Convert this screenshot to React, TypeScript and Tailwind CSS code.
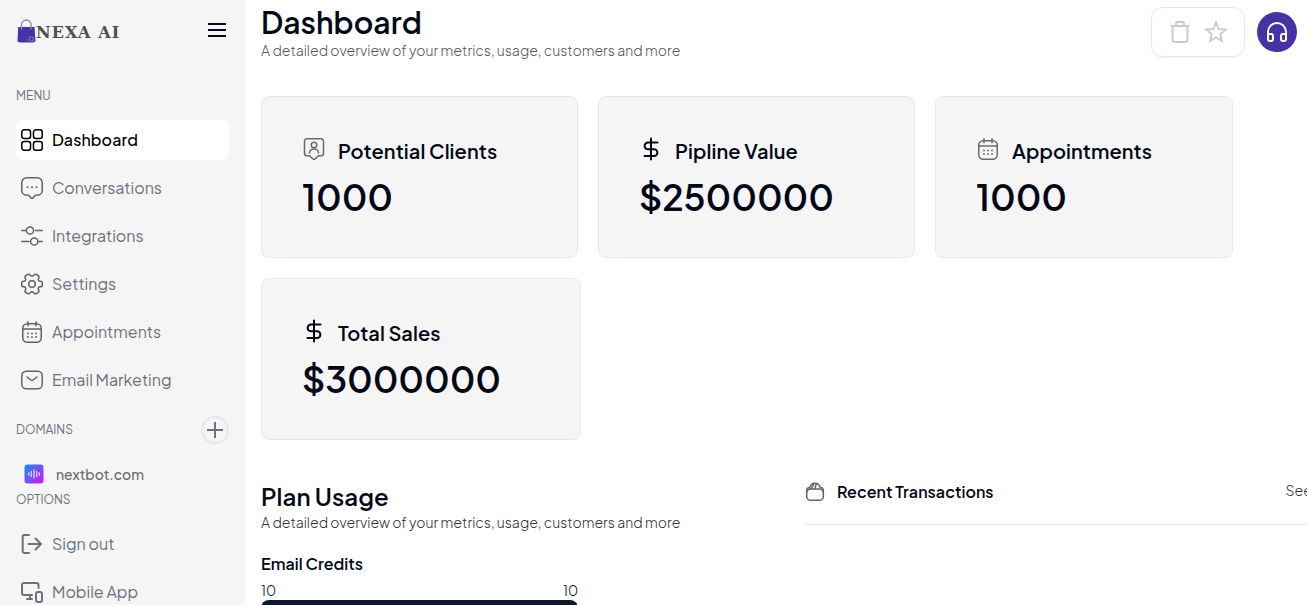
import type { ReactNode } from "react";

const Svg = ({ children, className = "", w = 24, h = 24, sw = 1.5, box = "0 0 24 24" }: { children: ReactNode; className?: string; w?: number; h?: number; sw?: number; box?: string }) => (
  <svg width={w} height={h} viewBox={box} fill="none" stroke="currentColor" strokeWidth={sw} strokeLinecap="round" strokeLinejoin="round" className={`shrink-0 ${className}`}>
    {children}
  </svg>
);

const CalendarShape = () => (
  <>
    <rect x="2.75" y="3.75" width="18.5" height="18.5" rx="4.5" />
    <path d="M3 9h18M8 1.75v4M16 1.75v4" />
    <path strokeWidth="1.9" d="M8 13.5h.01M12 13.5h.01M16 13.5h.01M8 17h.01M12 17h.01M16 17h.01" />
  </>
);

const Dollar = () => (
  <Svg sw={2}>
    <path d="M12 1.5v21M18.5 5.5H9a3.4 3.4 0 0 0 0 6.8h6a3.4 3.4 0 0 1 0 6.8H5.5" />
  </Svg>
);

const menu = [
  {
    label: "Conversations",
    icon: (
      <>
        <path d="M7 1.75h10a5 5 0 0 1 5.25 5.25v7.5A4.5 4.5 0 0 1 18 19c-2 0-2.9.2-3.6 1.1l-1.2 1.6a1.5 1.5 0 0 1-2.4 0l-1.2-1.6C8.9 19.2 8 19 6 19a4.5 4.5 0 0 1-4.25-4.5V7A5 5 0 0 1 7 1.75z" />
        <path strokeWidth="2" d="M7.5 11.2h.01M12 11.2h.01M16.5 11.2h.01" />
      </>
    ),
  },
  {
    label: "Integrations",
    icon: (
      <>
        <path d="M1.75 6.5h4.5M15.5 6.5h6.75M1.75 17.5H9M18.5 17.5h3.75" />
        <circle cx="10" cy="6.5" r="3.6" />
        <circle cx="14.2" cy="17.5" r="3.6" />
      </>
    ),
  },
  {
    label: "Settings",
    icon: (
      <>
        <circle cx="12" cy="12" r="3.3" />
        <path d="M10.2 3.2c.9 1.5 2.7 1.5 3.6 0 .6-1 1.7-1.2 2.6-.7l1.4.8c1.1.7 1.4 1.9.8 3-.9 1.5 0 3 1.7 3 1.2 0 2 .9 2 2v1.4c0 1.2-.9 2.1-2 2.1-1.7 0-2.6 1.5-1.7 3 .6 1.1.2 2.3-.8 2.9l-1.500.8c-.9.5-2 .2-2.600-.7-.9-1.500-2.600-1.500-3.500 0-.6.9-1.700 1.200-2.600.7l-1.400-.8c-1.100-.6-1.400-1.800-.8-2.900.9-1.500 0-3-1.700-3-1.200 0-2-.9-2-2.100v-1.400c0-1.100.9-2 2-2 1.700 0 2.600-1.500 1.700-3-.6-1.100-.2-2.300.8-3l1.400-.8c.9-.5 2-.3 2.600.7z" />
      </>
    ),
  },
  { label: "Appointments", icon: <CalendarShape /> },
  {
    label: "Email Marketing",
    icon: (
      <>
        <rect x="1.75" y="3.25" width="20.5" height="17.5" rx="4.5" />
        <path d="m7 9 3.1 2.5c1 .8 2.7.8 3.7 0L17 9" />
      </>
    ),
  },
];

const Card = ({ icon, title, value, className }: { icon: ReactNode; title: string; value: string; className: string }) => (
  <div className={`h-[162px] shrink-0 rounded-lg border border-slate-200 bg-[#f5f5f5] px-10 pt-10 ${className}`}>
    <div className="flex h-7 items-start">
      {icon}
      <h3 className="ml-3 text-[20px] leading-[27px] font-semibold tracking-[0.08px] whitespace-nowrap">{title}</h3>
    </div>
    <p className="mt-3 text-[36px] leading-10 font-[650] tracking-[-0.12px] whitespace-nowrap">{value}</p>
  </div>
);

const Sidebar = () => (
  <aside className="h-full w-[245px] shrink-0 overflow-hidden bg-[#f5f5f5] px-4">
    <div className="flex h-[60px] items-center justify-between">
      <div className="flex items-center pt-1">
        <svg width="22" height="26" viewBox="0 0 22 26" fill="none" className="shrink-0">
          <path d="M5.5 9V5.800a4.800 4.800 0 0 1 9.600 0V9" stroke="#8b82bd" strokeWidth="1.3" />
          <path d="M2.200 8h16.300l1 14.500L17 23.500H4l-2.500-1z" fill="#4632a6" />
          <path d="M5.500 10.500V7M15.100 10.500V7" stroke="#a69ed8" strokeWidth=".9" />
          <path d="M13 18h4v4h-3zM10 21h2" stroke="#9589cf" strokeWidth=".8" />
        </svg>
        <span className="-ml-0.5 pt-0.5 font-['DejaVu_Serif',serif] text-[16px] leading-5 font-bold tracking-[1.1px] text-[#505050]">NEXA AI</span>
      </div>
      <Svg sw={2} className="text-[#020817]">
        <path strokeLinecap="butt" d="M3 6h18M3 12h18M3 18h18" />
      </Svg>
    </div>
    <p className="mt-7 text-[12px] leading-4 text-gray-500">MENU</p>
    <nav className="mt-4 flex flex-col gap-2">
      <a className="flex h-10 items-center gap-2 rounded-lg bg-white pl-1 text-[16px] font-medium tracking-[0.1px] text-black">
        <Svg>
          <rect x="1.75" y="1.75" width="8.8" height="8.8" rx="2.5" />
          <rect x="13.45" y="1.75" width="8.8" height="8.8" rx="2.5" />
          <rect x="1.75" y="13.45" width="8.8" height="8.8" rx="2.5" />
          <rect x="13.45" y="13.45" width="8.8" height="8.8" rx="2.5" />
        </Svg>
        <span>Dashboard</span>
      </a>
      {menu.map((m) => (
        <a key={m.label} className="flex h-10 items-center gap-2 pl-1 text-[16px] text-gray-500">
          <Svg className="text-[#636363]">{m.icon}</Svg>
          <span>{m.label}</span>
        </a>
      ))}
    </nav>
    <div className="mt-4 flex h-7 items-center justify-between">
      <p className="text-[12px] leading-4 text-gray-500">DOMAINS</p>
      <span className="flex size-7 items-center justify-center rounded-full border-2 border-slate-200 text-gray-500">
        <Svg sw={2}><path strokeLinecap="butt" d="M12 4v16M4 12h16" /></Svg>
      </span>
    </div>
    <div className="mt-5 flex h-5 items-center pl-2">
      <svg width="20" height="20" viewBox="0 0 20 20" className="shrink-0">
        <defs>
          <linearGradient id="brand" x1="0" y1="0" x2="1" y2="1">
            <stop offset="0" stopColor="#168bff" />
            <stop offset=".5" stopColor="#7550fa" />
            <stop offset="1" stopColor="#d414ff" />
          </linearGradient>
        </defs>
        <rect x=".5" y=".5" width="19" height="19" rx="3" fill="url(#brand)" />
        <path d="M4.8 8.3v3.4M7.4 7v6M10 5.5v9M12.6 7v6M15.2 8.3v3.4" stroke="#fff" strokeOpacity=".75" strokeWidth="1.3" />
      </svg>
      <span className="ml-3 text-[14px] leading-5 font-medium text-[#6b6b6b]">nextbot.com</span>
    </div>
    <p className="mt-2 text-[12px] leading-4 text-gray-500">OPTIONS</p>
    <div className="mt-4 flex flex-col gap-2 text-[16px] text-gray-500">
      <a className="flex h-10 items-center gap-2 pl-1">
        <Svg sw={2}><path d="M9 3H4.5A1.8 1.8 0 0 0 2.7 4.800v14.400A1.800 1.800 0 0 0 4.500 21H9M8.500 12H21M15.500 6.500 21 12l-5.500 5.500" /></Svg>
        <span>Sign out</span>
      </a>
      <a className="flex h-10 items-center gap-2 pl-1">
        <Svg sw={2}><path d="M18.5 8V5A2 2 0 0 0 16.5 3H4a2 2 0 0 0-2 2v8a2 2 0 0 0 2 2h8M10 15v4M7 19h5" /><rect x="16" y="12" width="6" height="10" rx="2" /></Svg>
        <span>Mobile App</span>
      </a>
    </div>
  </aside>
);

export default function App() {
  return (
    <div className="flex h-[605px] w-[1307px] overflow-hidden bg-white font-['Plus_Jakarta_Sans','Inter','Liberation_Sans',sans-serif] text-[#020817]">
      <Sidebar />
      <main className="min-w-0 flex-1 overflow-hidden pl-4">
        <header className="flex h-24 items-start justify-between">
          <div className="pt-1">
            <h1 className="text-[30px] leading-9 font-semibold tracking-[0.05px]">Dashboard</h1>
            <p className="text-[14px] leading-5 font-light whitespace-nowrap text-[#555]">A detailed overview of your metrics, usage, customers and more</p>
          </div>
          <div className="flex items-start gap-3 pt-[7px] pr-[10px]">
            <div className="flex h-[50px] w-[94px] items-center justify-center gap-3 rounded-xl border border-slate-200 text-[#cacaca] shadow-[0_1px_2px_rgba(0,0,0,0.05)]">
              <Svg sw={2}><path strokeLinecap="butt" strokeLinejoin="miter" d="M2.5 6h19M8 6V3.5A1.5 1.5 0 0 1 9.5 2h5A1.5 1.5 0 0 1 16 3.5V6" /><path d="M4.5 6v14a2 2 0 0 0 2 2h11a2 2 0 0 0 2-2V6" /></Svg>
              <Svg sw={1.8}><path strokeLinejoin="miter" d="m12 2.500 2.600 6.500 7.200.5-5.500 4.600 1.800 7-6.100-3.800-6.100 3.800 1.800-7-5.500-4.600 7.200-.5z" /></Svg>
            </div>
            <div className="mt-[5px] flex size-10 items-center justify-center rounded-full bg-[#4632a6] text-white">
              <Svg sw={2}><path d="M3 14h3a2 2 0 0 1 2 2v3a2 2 0 0 1-2 2H5a2 2 0 0 1-2-2v-7a9 9 0 0 1 18 0v7a2 2 0 0 1-2 2h-1a2 2 0 0 1-2-2v-3a2 2 0 0 1 2-2h3" /></Svg>
            </div>
          </div>
        </header>

        <section className="flex flex-wrap gap-5">
          <Card className="w-[317px]" title="Potential Clients" value="1000"
            icon={<Svg className="text-[#6b6b6b]"><path d="M5 1.75h14a2.5 2.5 0 0 1 2.5 2.5v12a2.5 2.5 0 0 1-2.5 2.5h-2.5L13.200 21.800a2 2 0 0 1-2.400 0L7.500 18.750H5a2.500 2.500 0 0 1-2.500-2.500v-12A2.500 2.500 0 0 1 5 1.750z" /><circle cx="12" cy="8" r="2.75" /><path d="M7.5 16a4.500 4 0 0 1 9 0" /></Svg>} />
          <Card className="w-[317px]" title="Pipline Value" value="$2500000" icon={<Dollar />} />
          <Card className="w-[298px]" title="Appointments" value="1000" icon={<Svg className="text-[#6b6b6b]"><CalendarShape /></Svg>} />
          <Card className="w-[320px]" title="Total Sales" value="$3000000" icon={<Dollar />} />
        </section>

        <div className="mt-10 flex">
          <section className="w-[544px] shrink-0">
            <h2 className="text-[24px] leading-8 font-semibold tracking-[0.05px]">Plan Usage</h2>
            <p className="text-[14px] leading-5 font-light whitespace-nowrap text-[#2b303c]">A detailed overview of your metrics, usage, customers and more</p>
            <div className="mt-5 w-[317px]">
              <h3 className="text-[16px] leading-6 font-semibold tracking-[0.04px]">Email Credits</h3>
              <div className="mt-1 flex justify-between text-[14px] leading-5 font-light"><span>10</span><span>10</span></div>
              <div className="h-4 rounded-full bg-[#0f172a]" />
            </div>
          </section>
          <section className="w-[544px] shrink-0">
            <div className="flex h-[45px] items-start border-b border-slate-200">
              <Svg w={20} h={20} sw={1.8} className="mt-0.5 text-[#636363]"><rect x="2" y="8.5" width="20" height="13.5" rx="5" /><path d="M2 11.5C1.5 8.5 3 6.5 5.5 6.5M22 11.5c.5-3-1-5-3.5-5M5.5 7C6.5 3.5 9 1.500 12 1.500s5.500 2 6.500 5.500M7.500 8 11 2M12 8l1.500-6" /></Svg>
              <h3 className="ml-3 text-[16px] leading-6 font-semibold tracking-[0.06px] whitespace-nowrap">Recent Transactions</h3>
              <span className="ml-auto w-[63.5px] text-[14px] leading-5 font-light whitespace-nowrap text-[#2b303c]">See all</span>
            </div>
          </section>
        </div>
      </main>
    </div>
  );
}
